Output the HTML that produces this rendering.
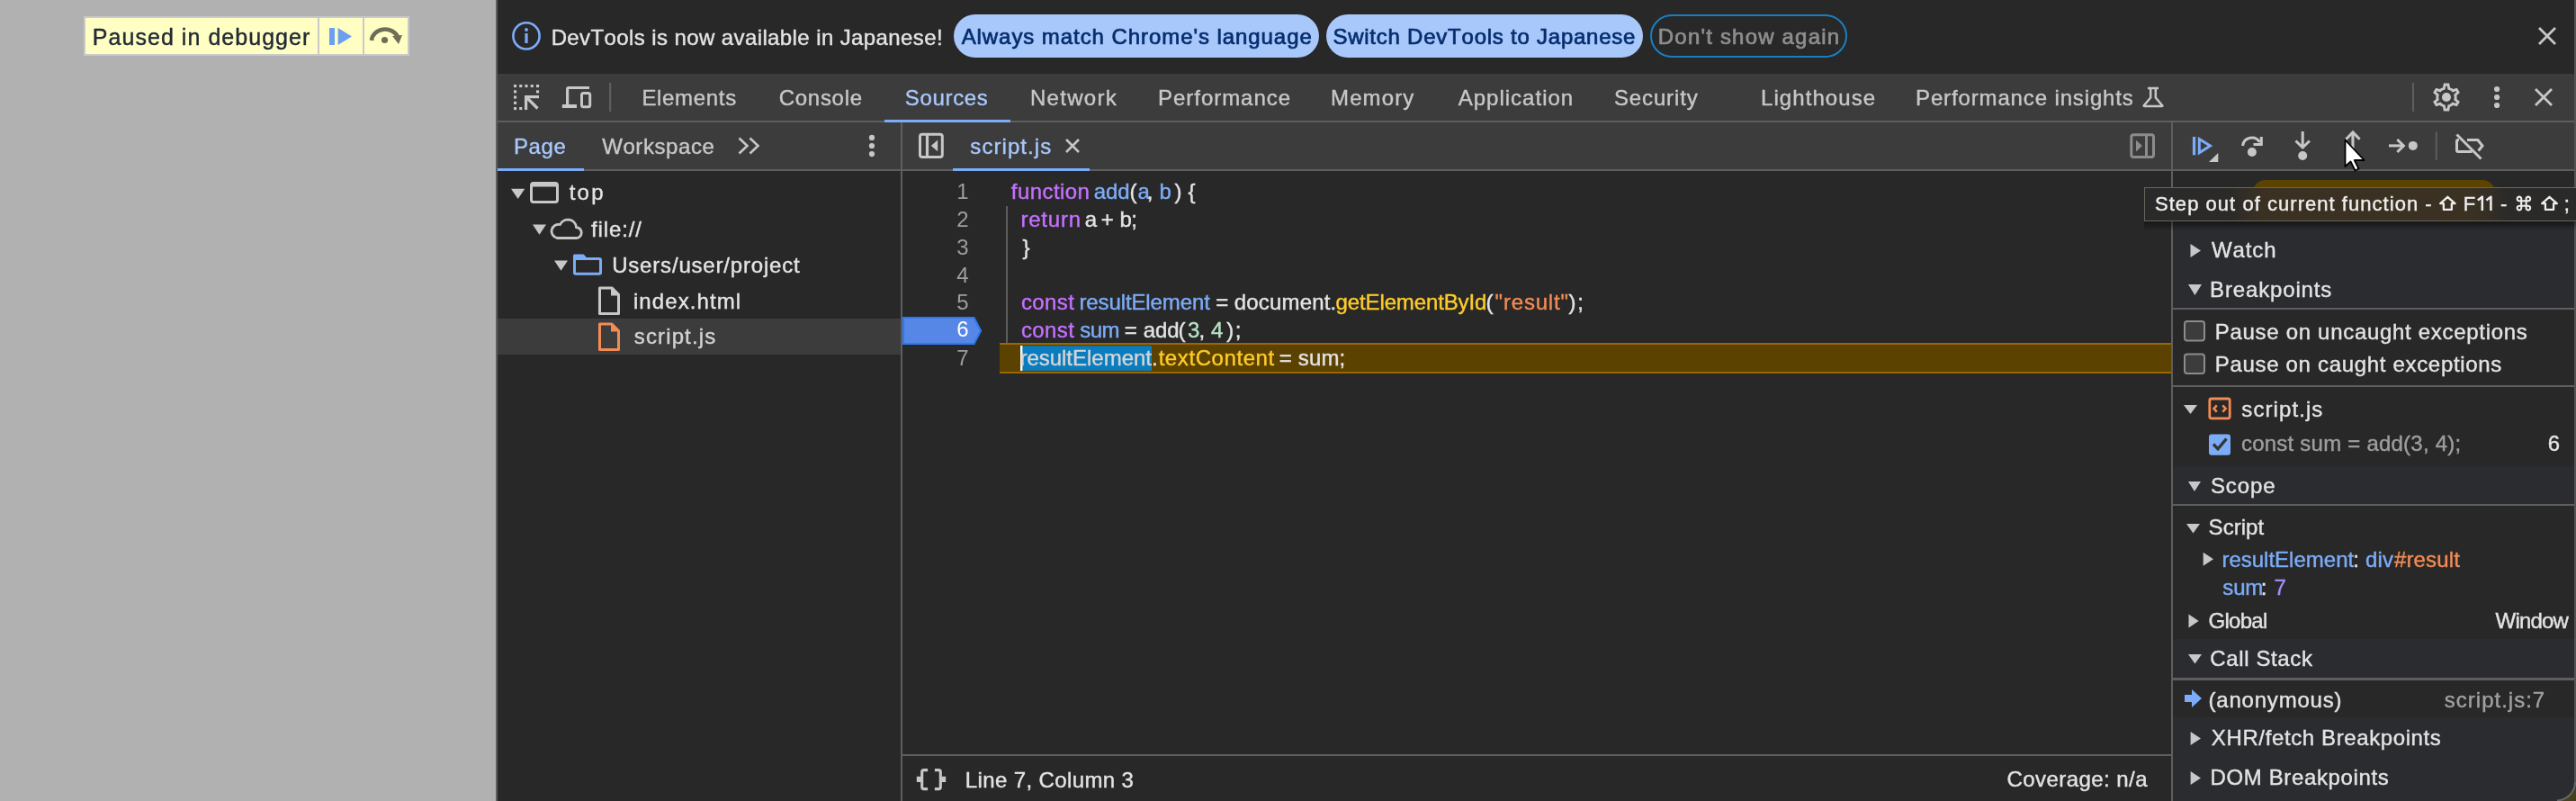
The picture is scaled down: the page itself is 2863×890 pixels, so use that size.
<!DOCTYPE html>
<html><head><meta charset="utf-8"><title>DevTools</title>
<style>html,body{margin:0;padding:0;width:2863px;height:890px;overflow:hidden;background:#282828}
svg text{font-family:"Liberation Sans",sans-serif;font-kerning:none;white-space:pre}</style></head>
<body><svg width="2863" height="890" viewBox="0 0 2863 890" style="display:block;will-change:transform"><rect x="0" y="0" width="2863" height="890" fill="#282828" />
<rect x="0" y="0" width="551" height="890" fill="#b1b1b1" />
<rect x="551" y="0" width="2" height="890" fill="#5e5e5e" />
<rect x="553" y="0" width="2308" height="82" fill="#282828" />
<rect x="553" y="82" width="2308" height="52" fill="#3c3c3c" />
<rect x="553" y="134" width="2308" height="2" fill="#5e5e5e" />
<rect x="553" y="136" width="2308" height="52" fill="#3c3c3c" />
<rect x="553" y="188" width="2308" height="2" fill="#5e5e5e" />
<rect x="553" y="190" width="448" height="700" fill="#282828" />
<rect x="553" y="354" width="448" height="40" fill="#3c3c3c" />
<rect x="1001" y="136" width="2" height="754" fill="#5e5e5e" />
<rect x="2413" y="136" width="2" height="754" fill="#5e5e5e" />
<rect x="1003" y="838" width="1410" height="2" fill="#5e5e5e" />
<rect x="2415" y="250" width="446" height="92" fill="#2b2c30" />
<rect x="2415" y="342" width="446" height="2" fill="#5e5e5e" />
<rect x="2415" y="428" width="446" height="2" fill="#5e5e5e" />
<rect x="2415" y="518" width="446" height="42" fill="#2b2c30" />
<rect x="2415" y="560" width="446" height="2" fill="#5e5e5e" />
<rect x="2415" y="710" width="446" height="43" fill="#2b2c30" />
<rect x="2415" y="753" width="446" height="3" fill="#5e5e5e" />
<rect x="2415" y="797" width="446" height="93" fill="#2b2c30" />
<rect x="93" y="18" width="362" height="44" fill="#c9c9c9" />
<rect x="95" y="20" width="358" height="40" fill="#ffffc4" />
<rect x="353" y="20" width="2" height="40" fill="#c9c9c9" />
<rect x="403" y="20" width="2" height="40" fill="#c9c9c9" />
<text x="102.85" y="49.8" font-size="25" fill="#222a35" letter-spacing="1.040"  stroke="#222a35" stroke-width="0.4">Paused in debugger</text>
<rect x="366" y="31" width="6" height="19" fill="#6b9ff0" />
<path d="M375.6 31 L391 40.5 L375.6 50 Z" fill="#6b9ff0"/>
<path d="M413 45 A15 13 0 0 1 442 41" fill="none" stroke="#6e6e58" stroke-width="4.5"/>
<path d="M436 40 L447 39 L443 49 Z" fill="#6e6e58"/>
<circle cx="427.5" cy="44.5" r="3.6" fill="#6e6e58"/>
<circle cx="585" cy="39.9" r="14.6" fill="none" stroke="#7cacf8" stroke-width="2.6"/>
<rect x="583.4" y="37" width="3.2000000000000455" height="11" fill="#7cacf8" />
<circle cx="585" cy="33" r="1.9" fill="#7cacf8"/>
<text x="612.63" y="49.5" font-size="24" fill="#e3e3e3" letter-spacing="0.400"  stroke="#e3e3e3" stroke-width="0.4">DevTools is now available in Japanese!</text>
<rect x="1060" y="16" width="406" height="48" fill="#a8c7fa" rx="24" />
<text x="1068.65" y="49" font-size="24" fill="#062e6f" letter-spacing="0.932" stroke="#062e6f" stroke-width="0.7">Always match Chrome&#x27;s language</text>
<rect x="1474" y="16" width="352" height="48" fill="#a8c7fa" rx="24" />
<text x="1481.41" y="49" font-size="24" fill="#062e6f" letter-spacing="0.765" stroke="#062e6f" stroke-width="0.7">Switch DevTools to Japanese</text>
<rect x="1835" y="17" width="217" height="46" rx="23" fill="none" stroke="#1a7fc1" stroke-width="2"/>
<text x="1842.83" y="49" font-size="24" fill="#8e8e8e" letter-spacing="1.191" stroke="#8e8e8e" stroke-width="0.7">Don&#x27;t show again</text>
<path d="M2822 31 L2840 49 M2840 31 L2822 49" stroke="#c7c7c7" stroke-width="2.8" fill="none"/>
<rect x="571" y="94" width="3.1000000000000227" height="3.0999999999999943" fill="#c7c7c7" />
<rect x="577.2" y="94" width="3.1000000000000227" height="3.0999999999999943" fill="#c7c7c7" />
<rect x="583.4" y="94" width="3.1000000000000227" height="3.0999999999999943" fill="#c7c7c7" />
<rect x="589.7" y="94" width="3.1000000000000227" height="3.0999999999999943" fill="#c7c7c7" />
<rect x="596" y="94" width="3.1000000000000227" height="3.0999999999999943" fill="#c7c7c7" />
<rect x="571" y="100.3" width="3.1000000000000227" height="3.0999999999999943" fill="#c7c7c7" />
<rect x="596" y="100.3" width="3.1000000000000227" height="3.0999999999999943" fill="#c7c7c7" />
<rect x="571" y="106.5" width="3.1000000000000227" height="3.0999999999999943" fill="#c7c7c7" />
<rect x="571" y="112.8" width="3.1000000000000227" height="3.0999999999999943" fill="#c7c7c7" />
<rect x="571" y="119" width="3.1000000000000227" height="3.0999999999999943" fill="#c7c7c7" />
<rect x="577.2" y="119" width="3.1000000000000227" height="3.0999999999999943" fill="#c7c7c7" />
<rect x="583" y="106" width="16" height="3.200000000000003" fill="#c7c7c7" />
<rect x="583" y="106" width="3.2000000000000455" height="16" fill="#c7c7c7" />
<path d="M585 108 L597.5 120.5" stroke="#c7c7c7" stroke-width="3.2"/>
<path d="M655 97.5 H632 Q630.6 97.5 630.6 99 V116" fill="none" stroke="#c7c7c7" stroke-width="3.2"/>
<rect x="624.8" y="116" width="16.200000000000045" height="4" fill="#c7c7c7" />
<rect x="646.5" y="103.5" width="9.2" height="15.2" rx="2" fill="none" stroke="#c7c7c7" stroke-width="3"/>
<rect x="677" y="92" width="2.2000000000000455" height="32" fill="#5e5e5e" />
<text x="713.43" y="117" font-size="24" fill="#c7c7c7" letter-spacing="0.670"  stroke="#c7c7c7" stroke-width="0.4">Elements</text>
<text x="865.78" y="117" font-size="24" fill="#c7c7c7" letter-spacing="0.705"  stroke="#c7c7c7" stroke-width="0.4">Console</text>
<text x="1005.71" y="117" font-size="24" fill="#a8c7fa" letter-spacing="0.686"  stroke="#a8c7fa" stroke-width="0.4">Sources</text>
<text x="1145.03" y="117" font-size="24" fill="#c7c7c7" letter-spacing="1.269"  stroke="#c7c7c7" stroke-width="0.4">Network</text>
<text x="1287.03" y="117" font-size="24" fill="#c7c7c7" letter-spacing="0.964"  stroke="#c7c7c7" stroke-width="0.4">Performance</text>
<text x="1479.03" y="117" font-size="24" fill="#c7c7c7" letter-spacing="1.129"  stroke="#c7c7c7" stroke-width="0.4">Memory</text>
<text x="1620.75" y="117" font-size="24" fill="#c7c7c7" letter-spacing="1.000"  stroke="#c7c7c7" stroke-width="0.4">Application</text>
<text x="1793.91" y="117" font-size="24" fill="#c7c7c7" letter-spacing="0.877"  stroke="#c7c7c7" stroke-width="0.4">Security</text>
<text x="1957.03" y="117" font-size="24" fill="#c7c7c7" letter-spacing="1.067"  stroke="#c7c7c7" stroke-width="0.4">Lighthouse</text>
<text x="2129.03" y="117" font-size="24" fill="#c7c7c7" letter-spacing="0.863"  stroke="#c7c7c7" stroke-width="0.4">Performance insights</text>
<rect x="983" y="133" width="140" height="3" fill="#7cacf8" />
<path d="M2387 98 H2399 M2390.2 98 V108.5 L2383 117 Q2382 118 2383.5 118 H2402.5 Q2404 118 2403 117 L2395.8 108.5 V98" fill="none" stroke="#c7c7c7" stroke-width="2.5" stroke-linejoin="round"/>
<rect x="2681" y="92" width="2" height="32" fill="#5e5e5e" />
<g transform="translate(2719 108) scale(0.0402) translate(-480 480)"><path fill-rule="evenodd" fill="#c7c7c7" d="m403-96-22-114q-23-9-44.5-21T296-259l-110 37-77-133 87-76q-2-12-3-24t-1-25q0-13 1-25t3-24l-87-76 77-133 110 37q19-16 40.5-28t44.5-21l22-114h154l22 114q23 9 44.5 21t40.5 28l110-37 77 133-87 76q2 12 3 24t1 25q0 13-1 25t-3 24l87 76-77 133-110-37q-19 16-40.5 28T579-210L557-96H403Zm59-72h36l19-99q38-7 71-26t57-48l96 32 18-30-76-67q6-17 9.5-35.5T696-480q0-20-3.5-38.5T683-554l76-67-18-30-96 32q-24-29-57-48t-71-26l-19-99h-36l-19 99q-38 7-71 26t-57 48l-96-32-18 30 76 67q-6 17-9.5 35.5T264-480q0 20 3.5 38.5T277-406l-76 67 18 30 96-32q24 29 57 48t71 26l19 99Z"/><circle cx="480" cy="-480" r="125" fill="#c7c7c7"/></g>
<circle cx="2775.1" cy="99" r="3.1" fill="#c7c7c7"/>
<circle cx="2775.1" cy="108" r="3.1" fill="#c7c7c7"/>
<circle cx="2775.1" cy="117" r="3.1" fill="#c7c7c7"/>
<path d="M2818 99 L2836 117 M2836 99 L2818 117" stroke="#c7c7c7" stroke-width="2.8" fill="none"/>
<text x="571.03" y="171" font-size="24" fill="#a8c7fa" letter-spacing="0.561"  stroke="#a8c7fa" stroke-width="0.4">Page</text>
<rect x="553" y="187" width="96" height="3" fill="#7cacf8" />
<text x="669.19" y="171" font-size="24" fill="#c7c7c7" letter-spacing="0.580"  stroke="#c7c7c7" stroke-width="0.4">Workspace</text>
<path d="M821.5 153.5 L830.5 162 L821.5 170.5 M833.5 153.5 L842.5 162 L833.5 170.5" fill="none" stroke="#c7c7c7" stroke-width="2.6"/>
<circle cx="969" cy="152.9" r="3.1" fill="#c7c7c7"/>
<circle cx="969" cy="162" r="3.1" fill="#c7c7c7"/>
<circle cx="969" cy="171.1" r="3.1" fill="#c7c7c7"/>
<rect x="1022.5" y="149.3" width="24.8" height="25.3" rx="2.5" fill="none" stroke="#c7c7c7" stroke-width="3"/>
<rect x="1028.9" y="149" width="3.199999999999818" height="26" fill="#c7c7c7" />
<path d="M1042.2 155.5 L1034.8 162 L1042.2 168.3 Z" fill="#c7c7c7"/>
<text x="1078.33" y="171" font-size="24" fill="#a8c7fa" letter-spacing="1.062"  stroke="#a8c7fa" stroke-width="0.4">script.js</text>
<path d="M1185 155 L1199 169 M1199 155 L1185 169" stroke="#c7c7c7" stroke-width="2.5" fill="none"/>
<rect x="1059" y="187" width="152" height="3" fill="#7cacf8" />
<rect x="2368.8" y="149.7" width="24.7" height="24.8" rx="2.5" fill="none" stroke="#8c8c8c" stroke-width="3"/>
<rect x="2384" y="149" width="3" height="26" fill="#8c8c8c" />
<path d="M2374 155.8 L2381 162 L2374 168.4 Z" fill="#8c8c8c"/>
<rect x="2436.9" y="151.9" width="3.299999999999727" height="20.400000000000006" fill="#7cacf8" />
<path d="M2444.3 154.5 L2456.5 162.1 L2444.3 169.7 Z" fill="none" stroke="#7cacf8" stroke-width="3" stroke-linejoin="miter"/>
<path d="M2465.3 170 V180 H2455 Z" fill="#c7c7c7"/>
<path d="M2492.5 162 A10.3 10.3 0 0 1 2511.5 158" fill="none" stroke="#c7c7c7" stroke-width="3"/>
<path d="M2513.3 152 V160.5 H2504.5" fill="none" stroke="#c7c7c7" stroke-width="3" stroke-linejoin="miter"/>
<circle cx="2502.9" cy="169" r="5" fill="#c7c7c7"/>
<rect x="2557.7" y="146" width="3.0" height="17" fill="#c7c7c7" />
<path d="M2551.5 156.5 L2559.2 164 L2566.9 156.5" fill="none" stroke="#c7c7c7" stroke-width="3"/>
<circle cx="2559.2" cy="173" r="5" fill="#c7c7c7"/>
<rect x="2613.4" y="148" width="3.099999999999909" height="24" fill="#c7c7c7" />
<path d="M2607.4 154.8 L2615 147 L2622.6 154.8" fill="none" stroke="#c7c7c7" stroke-width="3"/>
<circle cx="2615" cy="173" r="5" fill="#c7c7c7"/>
<rect x="2655" y="160.4" width="17" height="3.0" fill="#c7c7c7" />
<path d="M2664.3 155 L2671.4 162 L2664.3 169" fill="none" stroke="#c7c7c7" stroke-width="3"/>
<circle cx="2681.8" cy="161.9" r="5" fill="#c7c7c7"/>
<rect x="2706.8" y="146.4" width="2.0" height="31.299999999999983" fill="#5e5e5e" />
<path d="M2733 155.5 H2732 Q2730.5 155.5 2730.5 157 V167 Q2730.5 168.5 2732 168.5 H2747.5 M2742 155.5 H2753.8 L2759 162 L2754.5 167.5" fill="none" stroke="#c7c7c7" stroke-width="3" stroke-linejoin="miter"/>
<path d="M2730.5 149.5 L2757.5 176.5" stroke="#c7c7c7" stroke-width="3"/>
<path d="M568 209.7 H583.3 L575.65 221 Z" fill="#c7c7c7"/>
<rect x="590.5" y="203.5" width="29" height="21" rx="2.5" fill="none" stroke="#c7c7c7" stroke-width="3"/>
<rect x="590" y="203" width="30" height="4.5" fill="#c7c7c7" />
<text x="632.64" y="222.3" font-size="24" fill="#e3e3e3" letter-spacing="2.254"  stroke="#e3e3e3" stroke-width="0.4">top</text>
<path d="M592 249.5 H607 L599.5 260.7 Z" fill="#c7c7c7"/>
<path d="M619 264.5 H640 A6 6 0 0 0 640.5 252.5 A9.5 9.5 0 0 0 622.5 249.5 A7.2 7.2 0 0 0 619 264.5 Z" fill="none" stroke="#c7c7c7" stroke-width="2.8"/>
<text x="657.06" y="262.8" font-size="24" fill="#e3e3e3" letter-spacing="0.859"  stroke="#e3e3e3" stroke-width="0.4">file://</text>
<path d="M616 289.5 H631 L623.5 300.8 Z" fill="#c7c7c7"/>
<path d="M638.5 284 H648 L651 287.5 H666 Q667.5 287.5 667.5 289 V303 Q667.5 304.3 666 304.3 H640 Q638.5 304.3 638.5 303 Z" fill="none" stroke="#7cacf8" stroke-width="3" stroke-linejoin="round"/>
<rect x="638.5" y="284" width="11.5" height="5" fill="#7cacf8" />
<text x="680.15" y="303.3" font-size="24" fill="#e3e3e3" letter-spacing="0.817"  stroke="#e3e3e3" stroke-width="0.4">Users/user/project</text>
<path d="M666.5 319.9 H680 L687.5 327.4 V348.4 H666.5 Z" fill="none" stroke="#c7c7c7" stroke-width="3" stroke-linejoin="round"/>
<path d="M679 319.9 V328.4 H687.5 Z" fill="#c7c7c7"/>
<text x="703.89" y="342.6" font-size="24" fill="#e3e3e3" letter-spacing="1.103"  stroke="#e3e3e3" stroke-width="0.4">index.html</text>
<path d="M666.5 360.0 H680 L687.5 367.5 V388.5 H666.5 Z" fill="none" stroke="#f28b54" stroke-width="3" stroke-linejoin="round"/>
<path d="M679 360.0 V368.5 H687.5 Z" fill="#f28b54"/>
<text x="704.83" y="382" font-size="24" fill="#d2d2d2" letter-spacing="1.124"  stroke="#d2d2d2" stroke-width="0.4">script.js</text>
<rect x="1118" y="229" width="2" height="152" fill="#5e5e5e" />
<rect x="1111" y="381" width="1302" height="34" fill="#9c6600" />
<rect x="1111" y="383" width="1302" height="30" fill="#5c4200" />
<rect x="1134" y="384.3" width="146" height="27.5" fill="#0a7dc0" />
<rect x="1134" y="384" width="2.400000000000091" height="28" fill="#ffffff" />
<path d="M1004 353 H1082.5 L1090 367.5 L1082.5 382 H1004 Z" fill="#5687e6" stroke="#2e79f0" stroke-width="2.2"/>
<text x="1076.5" y="221" font-size="24" fill="#9e9e9e" text-anchor="end">1</text>
<text x="1076.5" y="252" font-size="24" fill="#9e9e9e" text-anchor="end">2</text>
<text x="1076.5" y="283" font-size="24" fill="#9e9e9e" text-anchor="end">3</text>
<text x="1076.5" y="313.5" font-size="24" fill="#9e9e9e" text-anchor="end">4</text>
<text x="1076.5" y="344.3" font-size="24" fill="#9e9e9e" text-anchor="end">5</text>
<text x="1076.5" y="373.8" font-size="24" fill="#ffffff" text-anchor="end">6</text>
<text x="1076.5" y="406.2" font-size="24" fill="#9e9e9e" text-anchor="end">7</text>
<text x="1123.86" y="221" font-size="24" fill="#c470ff" letter-spacing="0.434"  stroke="#c470ff" stroke-width="0.4">function</text>
<text x="1215.68" y="221" font-size="24" fill="#7cacf8" letter-spacing="-0.088"  stroke="#7cacf8" stroke-width="0.4">add</text>
<text x="1255.51" y="221" font-size="24" fill="#e3e3e3" letter-spacing="0.000"  stroke="#e3e3e3" stroke-width="0.4">(</text>
<text x="1264.38" y="221" font-size="24" fill="#7cacf8" letter-spacing="0.000"  stroke="#7cacf8" stroke-width="0.4">a</text>
<text x="1274.84" y="221" font-size="24" fill="#e3e3e3" letter-spacing="0.000"  stroke="#e3e3e3" stroke-width="0.4">,</text>
<text x="1288.45" y="221" font-size="24" fill="#7cacf8" letter-spacing="0.000"  stroke="#7cacf8" stroke-width="0.4">b</text>
<text x="1305.56" y="221" font-size="24" fill="#e3e3e3" letter-spacing="0.000"  stroke="#e3e3e3" stroke-width="0.4">)</text>
<text x="1320.60" y="221" font-size="24" fill="#e3e3e3" letter-spacing="0.000"  stroke="#e3e3e3" stroke-width="0.4">{</text>
<text x="1134.41" y="252" font-size="24" fill="#c470ff" letter-spacing="0.791"  stroke="#c470ff" stroke-width="0.4">return</text>
<text x="1205.68" y="252" font-size="24" fill="#e3e3e3" letter-spacing="0.000"  stroke="#e3e3e3" stroke-width="0.4">a</text>
<text x="1223.83" y="252" font-size="24" fill="#e3e3e3" letter-spacing="0.000"  stroke="#e3e3e3" stroke-width="0.4">+</text>
<text x="1244.45" y="252" font-size="24" fill="#e3e3e3" letter-spacing="0.000"  stroke="#e3e3e3" stroke-width="0.4">b</text>
<text x="1257.34" y="252" font-size="24" fill="#e3e3e3" letter-spacing="0.000"  stroke="#e3e3e3" stroke-width="0.4">;</text>
<text x="1136.60" y="283" font-size="24" fill="#e3e3e3" letter-spacing="0.000"  stroke="#e3e3e3" stroke-width="0.4">}</text>
<text x="1134.98" y="344" font-size="24" fill="#c470ff" letter-spacing="0.383"  stroke="#c470ff" stroke-width="0.4">const</text>
<text x="1199.41" y="344" font-size="24" fill="#7cacf8" letter-spacing="-0.105"  stroke="#7cacf8" stroke-width="0.4">resultElement</text>
<text x="1351.33" y="344" font-size="24" fill="#e3e3e3" letter-spacing="0.000"  stroke="#e3e3e3" stroke-width="0.4">=</text>
<text x="1371.79" y="344" font-size="24" fill="#e3e3e3" letter-spacing="0.167"  stroke="#e3e3e3" stroke-width="0.4">document.</text>
<text x="1484.59" y="344" font-size="24" fill="#fdcb2b" letter-spacing="-0.129"  stroke="#fdcb2b" stroke-width="0.4">getElementById</text>
<text x="1651.51" y="344" font-size="24" fill="#e3e3e3" letter-spacing="0.000"  stroke="#e3e3e3" stroke-width="0.4">(</text>
<text x="1661.58" y="344" font-size="24" fill="#f28b54" letter-spacing="0.816"  stroke="#f28b54" stroke-width="0.4">&quot;result&quot;</text>
<text x="1743.56" y="344" font-size="24" fill="#e3e3e3" letter-spacing="1.637"  stroke="#e3e3e3" stroke-width="0.4">);</text>
<text x="1134.98" y="375" font-size="24" fill="#c470ff" letter-spacing="0.383"  stroke="#c470ff" stroke-width="0.4">const</text>
<text x="1200.33" y="375" font-size="24" fill="#7cacf8" letter-spacing="-0.545"  stroke="#7cacf8" stroke-width="0.4">sum</text>
<text x="1249.63" y="375" font-size="24" fill="#e3e3e3" letter-spacing="0.000"  stroke="#e3e3e3" stroke-width="0.4">=</text>
<text x="1270.68" y="375" font-size="24" fill="#e3e3e3" letter-spacing="-0.088"  stroke="#e3e3e3" stroke-width="0.4">add</text>
<text x="1309.51" y="375" font-size="24" fill="#e3e3e3" letter-spacing="0.000"  stroke="#e3e3e3" stroke-width="0.4">(</text>
<text x="1320.09" y="375" font-size="24" fill="#b7e2c5" letter-spacing="0.000"  stroke="#b7e2c5" stroke-width="0.4">3</text>
<text x="1332.54" y="375" font-size="24" fill="#e3e3e3" letter-spacing="0.000"  stroke="#e3e3e3" stroke-width="0.4">,</text>
<text x="1346.05" y="375" font-size="24" fill="#b7e2c5" letter-spacing="0.000"  stroke="#b7e2c5" stroke-width="0.4">4</text>
<text x="1363.26" y="375" font-size="24" fill="#e3e3e3" letter-spacing="1.437"  stroke="#e3e3e3" stroke-width="0.4">);</text>
<text x="1133.41" y="406" font-size="24" fill="#d5d5d5" letter-spacing="-0.013"  stroke="#d5d5d5" stroke-width="0.4">resultElement</text>
<text x="1280.11" y="406" font-size="24" fill="#e3e3e3" letter-spacing="0.000"  stroke="#e3e3e3" stroke-width="0.4">.</text>
<text x="1287.64" y="406" font-size="24" fill="#fdcb2b" letter-spacing="0.580"  stroke="#fdcb2b" stroke-width="0.4">textContent</text>
<text x="1421.73" y="406" font-size="24" fill="#e3e3e3" letter-spacing="0.000"  stroke="#e3e3e3" stroke-width="0.4">=</text>
<text x="1442.83" y="406" font-size="24" fill="#e3e3e3" letter-spacing="0.105"  stroke="#e3e3e3" stroke-width="0.4">sum;</text>
<g><path d="M1031.1 855.6 H1026.8 Q1024.7 855.6 1024.7 857.8 V864.8 M1024.7 867 V874.4 Q1024.7 876.6 1026.8 876.6 H1031.1" fill="none" stroke="#c7c7c7" stroke-width="3.1" stroke-linejoin="round"/><path d="M1018.8 862.8 H1023.2 L1026.2 864.5 V867.4 L1023.2 869.1 H1018.8 Z" fill="#c7c7c7"/></g>
<g transform="translate(2070 0) scale(-1 1)"><path d="M1031.1 855.6 H1026.8 Q1024.7 855.6 1024.7 857.8 V864.8 M1024.7 867 V874.4 Q1024.7 876.6 1026.8 876.6 H1031.1" fill="none" stroke="#c7c7c7" stroke-width="3.1" stroke-linejoin="round"/><path d="M1018.8 862.8 H1023.2 L1026.2 864.5 V867.4 L1023.2 869.1 H1018.8 Z" fill="#c7c7c7"/></g>
<text x="1072.83" y="874.7" font-size="24" fill="#e3e3e3" letter-spacing="0.372"  stroke="#e3e3e3" stroke-width="0.4">Line 7, Column 3</text>
<text x="2230.48" y="874" font-size="24" fill="#e3e3e3" letter-spacing="0.438"  stroke="#e3e3e3" stroke-width="0.4">Coverage: n/a</text>
<path d="M2504 244 V214 A14 14 0 0 1 2518 200 H2759 A14 14 0 0 1 2773 214 V244 Z" fill="#5c4300"/>
<path d="M2434.5 271 L2446 278.5 L2434.5 286 Z" fill="#c7c7c7"/>
<text x="2457.89" y="286" font-size="24" fill="#e3e3e3" letter-spacing="0.912"  stroke="#e3e3e3" stroke-width="0.4">Watch</text>
<path d="M2432 316 H2447 L2439.5 328 Z" fill="#c7c7c7"/>
<text x="2456.03" y="330" font-size="24" fill="#e3e3e3" letter-spacing="0.860"  stroke="#e3e3e3" stroke-width="0.4">Breakpoints</text>
<rect x="2428" y="357" width="22" height="21.5" rx="3" fill="#3c3c3c" stroke="#8c8c8c" stroke-width="2"/>
<text x="2461.73" y="377" font-size="24" fill="#e3e3e3" letter-spacing="0.700"  stroke="#e3e3e3" stroke-width="0.4">Pause on uncaught exceptions</text>
<rect x="2428" y="393.5" width="22" height="21.5" rx="3" fill="#3c3c3c" stroke="#8c8c8c" stroke-width="2"/>
<text x="2461.73" y="412.5" font-size="24" fill="#e3e3e3" letter-spacing="0.684"  stroke="#e3e3e3" stroke-width="0.4">Pause on caught exceptions</text>
<path d="M2427 450 H2442 L2434.5 460 Z" fill="#c7c7c7"/>
<rect x="2455.8" y="443" width="22.4" height="21.8" rx="2" fill="none" stroke="#f28b54" stroke-width="2.8"/>
<path d="M2463.8 450.3 L2460.5 454 L2463.8 457.7 M2470.3 450.3 L2473.6 454 L2470.3 457.7" fill="none" stroke="#f28b54" stroke-width="2.6"/>
<text x="2491.33" y="462.5" font-size="24" fill="#e3e3e3" letter-spacing="1.087"  stroke="#e3e3e3" stroke-width="0.4">script.js</text>
<rect x="2455" y="482.5" width="24" height="23.2" rx="3" fill="#7cacf8"/>
<path d="M2460 493.5 L2465 498.8 L2474.5 487.5" fill="none" stroke="#353535" stroke-width="3.4"/>
<text x="2490.98" y="501" font-size="24" fill="#9e9e9e" letter-spacing="0.225"  stroke="#9e9e9e" stroke-width="0.4">const sum = add(3, 4);</text>
<text x="2831.78" y="501" font-size="24" fill="#e3e3e3" letter-spacing="0.000"  stroke="#e3e3e3" stroke-width="0.4">6</text>
<path d="M2432 535 H2446 L2439.0 546 Z" fill="#c7c7c7"/>
<text x="2456.91" y="547.5" font-size="24" fill="#e3e3e3" letter-spacing="0.901"  stroke="#e3e3e3" stroke-width="0.4">Scope</text>
<path d="M2430 582 H2445 L2437.5 592.5 Z" fill="#c7c7c7"/>
<text x="2454.61" y="593.75" font-size="24" fill="#e3e3e3" letter-spacing="0.044"  stroke="#e3e3e3" stroke-width="0.4">Script</text>
<path d="M2448.7 613.7 L2460 621.2 L2448.7 628.7 Z" fill="#c7c7c7"/>
<text x="2469.41" y="630" font-size="24" fill="#7cacf8" letter-spacing="0.003"  stroke="#7cacf8" stroke-width="0.4">resultElement</text>
<text x="2615.31" y="630" font-size="24" fill="#e3e3e3" letter-spacing="0.000"  stroke="#e3e3e3" stroke-width="0.4">:</text>
<text x="2628.99" y="630" font-size="24" fill="#7cacf8" letter-spacing="0.205"  stroke="#7cacf8" stroke-width="0.4">div</text>
<text x="2660.89" y="630" font-size="24" fill="#f28b54" letter-spacing="0.166"  stroke="#f28b54" stroke-width="0.4">#result</text>
<text x="2470.33" y="661" font-size="24" fill="#7cacf8" letter-spacing="-0.195"  stroke="#7cacf8" stroke-width="0.4">sum</text>
<text x="2512.81" y="661" font-size="24" fill="#e3e3e3" letter-spacing="0.000"  stroke="#e3e3e3" stroke-width="0.4">:</text>
<text x="2527.47" y="661" font-size="24" fill="#a78bfa" letter-spacing="0.000"  stroke="#a78bfa" stroke-width="0.4">7</text>
<path d="M2432.5 682.5 L2443.7 690.0 L2432.5 697.5 Z" fill="#c7c7c7"/>
<text x="2454.49" y="697.5" font-size="24" fill="#e3e3e3" letter-spacing="-0.713"  stroke="#e3e3e3" stroke-width="0.4">Global</text>
<text x="2773.59" y="697.5" font-size="24" fill="#e3e3e3" letter-spacing="-0.802"  stroke="#e3e3e3" stroke-width="0.4">Window</text>
<path d="M2432 727 H2447 L2439.5 737.5 Z" fill="#c7c7c7"/>
<text x="2456.28" y="740" font-size="24" fill="#e3e3e3" letter-spacing="0.628"  stroke="#e3e3e3" stroke-width="0.4">Call Stack</text>
<path d="M2428 772 H2436 V766 L2447 776 L2436 786 V780 H2428 Z" fill="#7cacf8"/>
<text x="2454.51" y="786" font-size="24" fill="#e3e3e3" letter-spacing="0.791"  stroke="#e3e3e3" stroke-width="0.4">(anonymous)</text>
<text x="2716.83" y="786" font-size="24" fill="#a0a0a0" letter-spacing="1.002"  stroke="#a0a0a0" stroke-width="0.4">script.js:7</text>
<path d="M2434.6 813 L2446 820.5 L2434.6 828 Z" fill="#c7c7c7"/>
<text x="2457.86" y="828" font-size="24" fill="#e3e3e3" letter-spacing="0.611"  stroke="#e3e3e3" stroke-width="0.4">XHR/fetch Breakpoints</text>
<path d="M2434.6 857 L2446 864.5 L2434.6 872 Z" fill="#c7c7c7"/>
<text x="2456.43" y="871.5" font-size="24" fill="#e3e3e3" letter-spacing="0.646"  stroke="#e3e3e3" stroke-width="0.4">DOM Breakpoints</text>
<rect x="2861" y="0" width="2" height="890" fill="#ffffff"  fill-opacity="0.2"/>
<path d="M2863 868 V890 H2841 A22 22 0 0 0 2863 868 Z" fill="#46401f"/>
<path d="M2842 889.5 A20.5 20.5 0 0 0 2862 869" fill="none" stroke="#66666a" stroke-width="2"/>
<defs><linearGradient id="shd" x1="0" y1="0" x2="0" y2="1"><stop offset="0" stop-color="#000" stop-opacity="0.45"/><stop offset="1" stop-color="#000" stop-opacity="0"/></linearGradient></defs>
<rect x="2383" y="246" width="480" height="11" fill="url(#shd)" />
<defs><linearGradient id="ttg" x1="2383" y1="0" x2="2863" y2="0" gradientUnits="userSpaceOnUse"><stop offset="0.000" stop-color="#2a2a2a"/><stop offset="0.194" stop-color="#2b2a28"/><stop offset="0.275" stop-color="#3a3123"/><stop offset="0.760" stop-color="#3a3123"/><stop offset="0.848" stop-color="#2b2a28"/><stop offset="1.000" stop-color="#2a2a2a"/></linearGradient></defs>
<rect x="2383.5" y="208.5" width="490" height="37" fill="url(#ttg)" stroke="#66645a" stroke-width="1"/>
<text x="2395.00" y="234" font-size="22" fill="#eeeeee" letter-spacing="1.037"  stroke="#eeeeee" stroke-width="0.4">Step out of current function -</text>
<path d="M2712.2 226.128 L2720.35 218.79999999999998 L2728.5 226.128 H2724.8379999999997 V232.9 H2715.862 V226.128 Z" fill="none" stroke="#eeeeee" stroke-width="2.3" stroke-linejoin="round"/>
<text x="2737.70" y="234" font-size="22" fill="#eeeeee" letter-spacing="0.000"  stroke="#eeeeee" stroke-width="0.4">F</text>
<path d="M2758.8 234 V217.8 M2759.4 218.2 L2753.8 222.5" fill="none" stroke="#eeeeee" stroke-width="2.5"/>
<path d="M2768.4 234 V217.8 M2769.0 218.2 L2763.4 222.5" fill="none" stroke="#eeeeee" stroke-width="2.5"/>
<text x="2779.02" y="234" font-size="22" fill="#eeeeee" letter-spacing="0.000"  stroke="#eeeeee" stroke-width="0.4">-</text>
<g fill="none" stroke="#eeeeee" stroke-width="2.6" transform="translate(2805 226) scale(0.8) translate(-2805 -226)"><path d="M2801.5 222.5 H2808.3 M2801.5 229.5 H2808.3 M2801.5 222.5 V229.5 M2808.3 222.5 V229.5 M2801.5 222.5 H2799.5 A2.9 2.9 0 1 1 2801.5 220.5 V222.5 M2808.3 222.5 V220.5 A2.9 2.9 0 1 1 2810.3 222.5 H2808.3 M2801.5 229.5 V231.5 A2.9 2.9 0 1 1 2799.5 229.5 H2801.5 M2808.3 229.5 H2810.3 A2.9 2.9 0 1 1 2808.3 231.5 V229.5"/></g>
<path d="M2825.2 226.128 L2833.5 218.79999999999998 L2841.8 226.128 H2838.06 V232.9 H2828.94 V226.128 Z" fill="none" stroke="#eeeeee" stroke-width="2.3" stroke-linejoin="round"/>
<text x="2849.72" y="234" font-size="22" fill="#eeeeee" letter-spacing="0.000"  stroke="#eeeeee" stroke-width="0.4">;</text>
<path d="M2606.5 155.5 V185 L2612.5 179.5 L2617.5 189.5 L2621.5 187.5 L2616.8 178 H2627.6 Z" fill="#ffffff" stroke="#000000" stroke-width="1.8" stroke-linejoin="round"/></svg></body></html>
